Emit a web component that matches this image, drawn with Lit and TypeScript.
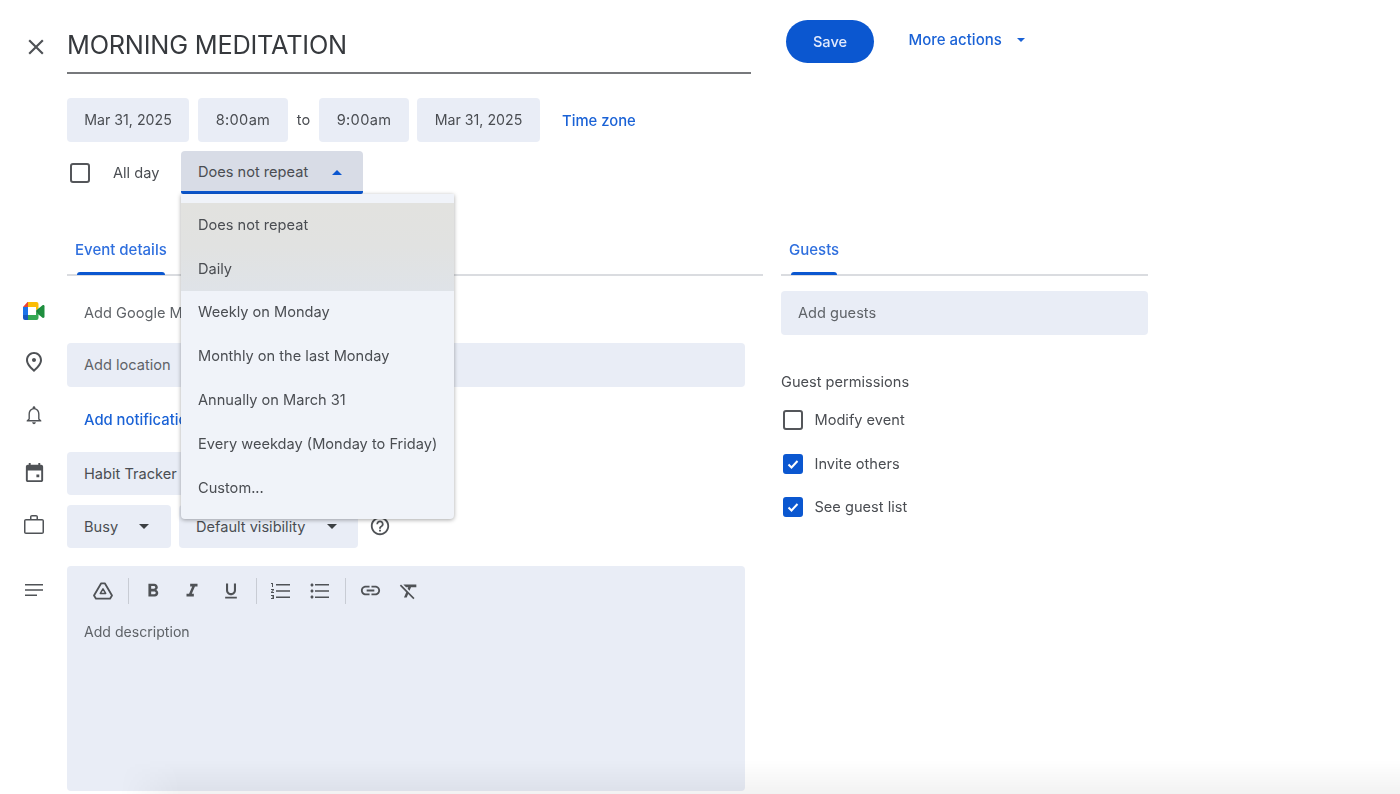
import { LitElement, css, html, svg } from "lit";
import { customElement } from "lit/decorators.js";

const ICONS: Record<string, string> = {
  close: "M19 6.41L17.59 5 12 10.59 6.41 5 5 6.41 10.59 12 5 17.59 6.41 19 12 13.41 17.59 19 19 17.59 13.41 12z",
  place: "M12 12c-1.1 0-2-.9-2-2s.9-2 2-2 2 .9 2 2-.9 2-2 2zm6-1.8C18 6.57 15.35 4 12 4s-6 2.57-6 6.2c0 2.34 1.95 5.44 6 9.14 4.05-3.7 6-6.8 6-9.14zM12 2c4.2 0 8 3.22 8 8.2 0 3.32-2.67 7.25-8 11.8-5.33-4.55-8-8.48-8-11.8C4 5.22 7.8 2 12 2z",
  bell: "M12 22c1.1 0 2-.9 2-2h-4c0 1.1.9 2 2 2zm6-6v-5c0-3.07-1.63-5.64-4.5-6.32V4c0-.83-.67-1.5-1.5-1.5s-1.500.67-1.500 1.500v.68C7.64 5.36 6 7.92 6 11v5l-2 2v1h16v-1l-2-2zm-.7 1.5H6.700l.8-.9V11c0-2.800 1.700-5.200 4.500-5.200s4.500 2.400 4.500 5.200v5.600z",
  event: "M19 4h-1V2h-2v2H8V2H6v2H5c-1.1 0-2 .9-2 2v14c0 1.1.9 2 2 2h14c1.1 0 2-.9 2-2V6c0-1.1-.9-2-2-2zm0 16H5V10h14v10zM14 14h3v3h-3z",
  work: "M20 6h-4V4c0-1.11-.89-2-2-2h-4c-1.11 0-2 .89-2 2v2H4c-1.11 0-1.99.89-1.99 2L2 19c0 1.11.89 2 2 2h16c1.11 0 2-.89 2-2V8c0-1.11-.89-2-2-2zm-5.500 0h-5V3.500h5V6zm6 13.500h-17V7.500h17v12z",
  notes: "M3 18h12v-1.600H3V18zM3 6v1.600h18V6H3zm0 6.800h18v-1.600H3v1.600z",
  help: "M11 18h2v-2h-2v2zm1-16C6.48 2 2 6.48 2 12s4.48 10 10 10 10-4.48 10-10S17.52 2 12 2zm0 18c-4.41 0-8-3.59-8-8s3.59-8 8-8 8 3.59 8 8-3.59 8-8 8zm0-14c-2.21 0-4 1.79-4 4h2c0-1.1.9-2 2-2s2 .9 2 2c0 2-3 1.75-3 5h2c0-2.25 3-2.5 3-5 0-2.21-1.79-4-4-4z",
  bold: "M15.6 10.79c.97-.67 1.65-1.77 1.65-2.79 0-2.26-1.75-4-4-4H7v14h7.04c2.09 0 3.71-1.7 3.71-3.79 0-1.52-.86-2.82-2.15-3.42zM10 6.5h3c.83 0 1.5.67 1.5 1.5s-.67 1.5-1.5 1.5h-3v-3zm3.5 9H10v-3h3.5c.83 0 1.5.67 1.5 1.5s-.67 1.5-1.5 1.5z",
  italic: "M10 4v3h2.21l-3.42 8H6v3h8v-3h-2.21l3.42-8H18V4z",
  underline: "M12 17c3.31 0 6-2.69 6-6V3h-2.5v8c0 1.93-1.57 3.5-3.5 3.5S8.5 12.93 8.5 11V3H6v8c0 3.31 2.69 6 6 6zm-7 2v2h14v-2H5z",
  numbered: "M2 17h2v.5H3v1h1v.5H2v1h3v-4H2v1zm1-9h1V4H2v1h1v3zm-1 3h1.8L2 13.1v.9h3v-1H3.2L5 10.9V10H2v1zm5-6v1.600h14V5H7zm0 14h14v-1.600H7V19zm0-6.200h14v-1.600H7v1.600z",
  bulleted: "M4 10.5c-.83 0-1.5.67-1.5 1.5s.67 1.5 1.5 1.5 1.5-.67 1.5-1.5-.67-1.5-1.5-1.500zm0-6c-.83 0-1.5.67-1.5 1.5S3.17 7.5 4 7.5 5.5 6.83 5.5 6 4.83 4.500 4 4.500zm0 12c-.83 0-1.5.68-1.5 1.5s.68 1.5 1.500 1.500 1.500-.68 1.500-1.500-.67-1.500-1.500-1.500zM7 19h14v-1.600H7V19zm0-6.200h14v-1.600H7v1.600zM7 5v1.600h14V5H7z",
  link: "M3.9 12c0-1.71 1.39-3.1 3.1-3.1h4V7H7c-2.76 0-5 2.24-5 5s2.24 5 5 5h4v-1.9H7c-1.71 0-3.1-1.39-3.1-3.1zM8 13h8v-2H8v2zm9-6h-4v1.9h4c1.71 0 3.1 1.39 3.1 3.1s-1.39 3.1-3.1 3.1h-4V17h4c2.76 0 5-2.24 5-5s-2.24-5-5-5z",
  clear: "M3.27 5L2 6.27l6.97 6.97L6.5 19h3l1.57-3.66L16.73 21 18 19.73 3.55 5.27 3.27 5zM6 5v.18L8.82 8h2.4l-.72 1.68 2.1 2.1L14.21 8H20V5H6z",
};

const icon = (name: string, size = 24) => html`<svg
  width=${size}
  height=${size}
  viewBox="0 0 24 24"
  fill="currentColor"
>
  ${svg`<path d=${ICONS[name]} />`}
</svg>`;

const meetLogo = html`<svg width="22" height="18" viewBox="0 0 22 18">
  <path d="M4.500 0H13v5H5L0 5z" fill="#ea4335" />
  <path d="M5 0h8.500A2 2 0 0 1 15.500 2v4.500L13 8.500V5H5z" fill="#fbbc04" />
  <path d="M0 5h5v8H0z" fill="#1a73e8" />
  <path d="M0 13h5v5H2a2 2 0 0 1-2-2z" fill="#1558c0" />
  <path d="M5 13h8v-3.500l2.500 2V16a2 2 0 0 1-2 2H5z" fill="#34a853" />
  <path d="M13 9l2.500-2.500 4-3.200c.8-.6 2-.1 2 .9v10.600c0 1-1.200 1.500-2 .9l-4-3.200z" fill="#1e8e3e" />
  <path d="M13 9l2.500-2.500v5z" fill="#188038" />
</svg>`;

const driveIcon = html`<svg width="24" height="24" viewBox="0 0 24 24" fill="none" stroke="currentColor">
  <path
    stroke-width="1.800"
    stroke-linejoin="round"
    d="M10.200 4.300h3.600l7.200 12.200-2 3.200H5l-2-3.200z"
  />
  <path stroke-width="1.500" stroke-linejoin="round" d="M12 9.800l2.700 4.600H9.300z" />
</svg>`;

const repeatOptions = [
  "Does not repeat",
  "Daily",
  "Weekly on Monday",
  "Monthly on the last Monday",
  "Annually on March 31",
  "Every weekday (Monday to Friday)",
  "Custom...",
];

const check = html`<svg width="14" height="14" viewBox="0 0 14 14" fill="none">
  <path d="M2.500 7.500l3 3 6-6.500" stroke="#fff" stroke-width="2" />
</svg>`;

@customElement("app-root")
export class AppRoot extends LitElement {
  static styles = css`
    :host {
      display: block;
      position: relative;
      width: 1400px;
      height: 794px;
      overflow: hidden;
      background: #fff;
      font-family: Inter, "Liberation Sans", sans-serif;
      font-size: 14.600px;
      color: #4a4d52;
    }

    svg {
      flex: none;
    }

    .page {
      display: grid;
      grid-template-columns: 763px 367px;
      column-gap: 18px;
      filter: blur(0.45px);
    }

    .left,
    .right {
      display: flex;
      flex-direction: column;
    }

    .row {
      display: grid;
      grid-template-columns: 67px 1fr;
      align-items: center;
    }

    .gutter {
      display: flex;
      justify-content: center;
      margin-left: 1px;
      color: #4f5256;
    }

    .title-row {
      height: 74px;
      align-items: end;
    }

    .title-row .gutter {
      align-self: start;
      padding: 34px 0 0 3px;
    }

    .title {
      width: 684px;
      box-sizing: border-box;
      height: 48px;
      padding-top: 1px;
      border-bottom: 2px solid #77797c;
      font-size: 25.300px;
      line-height: 36px;
      color: #36393d;
      letter-spacing: -0.2px;
    }

    .chip {
      display: flex;
      align-items: center;
      height: 43.500px;
      box-sizing: border-box;
      padding: 0 17px;
      background: #e9edf6;
      border-radius: 4px;
      white-space: nowrap;
    }

    .dates {
      display: flex;
      align-items: center;
      margin-top: 24px;
    }

    .date {
      width: 122px;
      justify-content: center;
      padding: 0;
      font-size: 14.200px;
    }

    .time {
      width: 90px;
      justify-content: center;
      padding: 0;
      letter-spacing: 0.3px;
    }

    .to {
      width: 31px;
      text-align: center;
    }

    .dates .date + .time {
      margin-left: 9px;
    }

    .dates .time + .date {
      margin-left: 8px;
      width: 123px;
    }

    .blue {
      color: #1a62d6;
      font-weight: 500;
      font-size: 14.800px;
    }

    .timezone {
      margin: 2px 0 0 22px;
    }

    .allday {
      display: flex;
      align-items: center;
      margin-top: 9.500px;
    }

    .box {
      width: 20px;
      height: 20px;
      box-sizing: border-box;
      border: 2px solid #54565a;
      border-radius: 3px;
      flex: none;
    }

    .box.on {
      display: flex;
      align-items: center;
      justify-content: center;
      background: #0b57d0;
      border-color: #0b57d0;
    }

    .allday .box {
      margin-left: 3px;
    }

    .allday-label {
      margin-left: 23px;
      width: 68px;
    }

    .select {
      position: relative;
      display: flex;
      align-items: center;
      width: 182px;
      height: 43px;
      box-sizing: border-box;
      padding: 2px 0 0 17px;
      background: #d8dce6;
      border-bottom: 3px solid #0b57d0;
      border-radius: 4px 4px 2px 2px;
    }

    .caret {
      width: 0;
      height: 0;
      border-left: 5.500px solid transparent;
      border-right: 5.500px solid transparent;
      border-top: 5.500px solid #3c4043;
    }

    .caret.up {
      border-top: 0;
      border-bottom: 5.500px solid #0b57d0;
      margin-left: 23.500px;
    }

    .caret.small {
      border-left-width: 4.500px;
      border-right-width: 4.500px;
      border-top: 4.500px solid #1a62d6;
      margin-left: 15px;
    }

    .menu {
      position: absolute;
      left: 0;
      top: 43px;
      z-index: 2;
      width: 273px;
      box-sizing: border-box;
      padding: 9px 0;
      background: #f0f3f9;
      border-radius: 0 0 4px 4px;
      box-shadow: 0 1px 4px rgba(0, 0, 0, 0.35);
    }

    .option {
      display: flex;
      align-items: center;
      height: 43.800px;
      padding-left: 17px;
      white-space: nowrap;
    }

    .option.first {
      background: linear-gradient(#e2e2df, #e1e2e1);
    }

    .option.second {
      background: linear-gradient(#e1e2e1, #dfe3e8);
    }

    .tabs {
      margin: 34px 0 0 67px;
      height: 48px;
      box-sizing: border-box;
      border-bottom: 2px solid #dadce0;
    }

    .right .tabs {
      margin-left: 0;
      margin-top: 165px;
    }

    .tab {
      display: inline-flex;
      flex-direction: column;
      align-items: center;
      height: 47px;
      margin-left: 8px;
      padding-top: 12px;
      box-sizing: border-box;
      color: #2f6fde;
      font-weight: 500;
      font-size: 15px;
    }

    .tab::after {
      content: "";
      display: block;
      width: calc(100% - 4px);
      height: 3px;
      margin-top: auto;
      background: #0b57d0;
      border-radius: 3px 3px 0 0;
    }

    .tab-row {
      margin-top: 15px;
    }

    .tab-row .gutter {
      padding-bottom: 4px;
    }

    .plain {
      display: flex;
      align-items: center;
      height: 43.500px;
      padding-left: 17px;
      color: #5f6368;
      white-space: nowrap;
    }

    .plain.blue {
      color: #1a62d6;
      padding-top: 1px;
      box-sizing: border-box;
    }

    .field {
      width: 678px;
      color: #5f6368;
    }

    .location {
      margin-top: 8.500px;
    }

    .location .gutter {
      padding-bottom: 6px;
    }

    .location .chip {
      height: 44px;
    }

    .notification {
      margin-top: 11px;
    }

    .notification .gutter {
      padding-bottom: 10px;
    }

    .calendar {
      margin-top: 10px;
    }

    .calendar .gutter {
      padding-bottom: 2px;
    }

    .calendar .chip {
      width: 380px;
      padding-top: 2px;
    }

    .visibility {
      margin-top: 9.500px;
    }

    .visibility .gutter {
      padding-bottom: 3px;
    }

    .visibility-inner {
      display: flex;
      align-items: center;
    }

    .visibility-inner .chip {
      padding-top: 1px;
    }

    .busy {
      width: 104px;
    }

    .busy .caret {
      margin-left: 21px;
    }

    .default {
      width: 179px;
      margin-left: 8px;
    }

    .default .caret {
      margin-left: 21.500px;
    }

    .help {
      display: flex;
      margin-left: 11px;
      color: #4f5256;
    }

    .desc-row {
      margin-top: 17.500px;
      align-items: start;
    }

    .desc-row .gutter {
      padding-top: 12px;
    }

    .desc {
      width: 678px;
      height: 225px;
      box-sizing: border-box;
      padding: 13px 17px;
      background: #e9edf6;
      border-radius: 4px;
      color: #5f6368;
    }

    .toolbar {
      display: flex;
      align-items: center;
      height: 24px;
      color: #4f5256;
      margin-left: 9px;
    }

    .tool {
      display: flex;
      width: 20px;
      justify-content: center;
      margin-right: 19px;
    }

    .sep {
      width: 1px;
      height: 26px;
      background: #c8ccd4;
      margin: 0 14px 0 -4px;
    }

    .desc-text {
      margin-top: 20px;
      font-size: 14.100px;
    }

    .actions {
      display: flex;
      align-items: center;
      height: 63px;
      padding: 20px 0 0 5px;
      box-sizing: border-box;
    }

    .save {
      display: flex;
      align-items: center;
      justify-content: center;
      width: 88px;
      height: 43px;
      background: #0b57d0;
      color: #e3eafc;
      border-radius: 22px;
      font-weight: 500;
    }

    .more {
      display: flex;
      align-items: center;
      margin: -4px 0 0 34.500px;
      font-size: 15px;
    }

    .guests {
      margin-top: 15px;
      width: 367px;
    }

    .guests-text {
      color: #5f6368;
    }

    .perm-title {
      margin-top: 38px;
      line-height: 18px;
    }

    .perm {
      display: flex;
      align-items: center;
      height: 43.700px;
      padding-left: 2px;
      gap: 11.500px;
    }

    .perm-list {
      margin-top: 7.500px;
    }

    .shade {
      position: absolute;
      left: 120px;
      right: 0;
      bottom: 0;
      height: 34px;
      z-index: 3;
      background: linear-gradient(rgba(0, 0, 0, 0), rgba(0, 0, 0, 0.05));
      -webkit-mask-image: linear-gradient(90deg, transparent, #000 60px);
      mask-image: linear-gradient(90deg, transparent, #000 60px);
      pointer-events: none;
    }
  `;

  render() {
    return html`
      <div class="page">
        <div class="left">
          <div class="row title-row">
            <div class="gutter">${icon("close", 26)}</div>
            <div class="title">MORNING MEDITATION</div>
          </div>

          <div class="row">
            <div></div>
            <div class="dates">
              <div class="chip date">Mar 31, 2025</div>
              <div class="chip time">8:00am</div>
              <div class="to">to</div>
              <div class="chip time">9:00am</div>
              <div class="chip date">Mar 31, 2025</div>
              <div class="blue timezone">Time zone</div>
            </div>
          </div>

          <div class="row">
            <div></div>
            <div class="allday">
              <div class="box"></div>
              <div class="allday-label">All day</div>
              <div class="select">
                Does not repeat
                <span class="caret up"></span>
                <div class="menu">
                  ${repeatOptions.map(
                    (opt, i) => html`<div
                      class="option ${i === 0 ? "first" : i === 1 ? "second" : ""}"
                    >
                      ${opt}
                    </div>`
                  )}
                </div>
              </div>
            </div>
          </div>

          <div class="tabs"><div class="tab">Event details</div></div>

          <div class="row tab-row">
            <div class="gutter">${meetLogo}</div>
            <div class="plain">Add Google Meet video conferencing</div>
          </div>
          <div class="row location">
            <div class="gutter">${icon("place")}</div>
            <div class="chip field">Add location</div>
          </div>
          <div class="row notification">
            <div class="gutter">${icon("bell", 22)}</div>
            <div class="plain blue">Add notification</div>
          </div>
          <div class="row calendar">
            <div class="gutter">${icon("event", 23)}</div>
            <div class="chip">Habit Tracker</div>
          </div>
          <div class="row visibility">
            <div class="gutter">${icon("work")}</div>
            <div class="visibility-inner">
              <div class="chip busy">Busy<span class="caret"></span></div>
              <div class="chip default">
                Default visibility<span class="caret"></span>
              </div>
              <div class="help">${icon("help", 22)}</div>
            </div>
          </div>
          <div class="row desc-row">
            <div class="gutter">${icon("notes")}</div>
            <div class="desc">
              <div class="toolbar">
                <span class="tool">${driveIcon}</span>
                <span class="sep"></span>
                <span class="tool">${icon("bold", 22)}</span>
                <span class="tool">${icon("italic", 22)}</span>
                <span class="tool">${icon("underline", 20)}</span>
                <span class="sep"></span>
                <span class="tool">${icon("numbered", 24)}</span>
                <span class="tool">${icon("bulleted", 24)}</span>
                <span class="sep"></span>
                <span class="tool">${icon("link", 23)}</span>
                <span class="tool">${icon("clear", 22)}</span>
              </div>
              <div class="desc-text">Add description</div>
            </div>
          </div>
        </div>

        <div class="right">
          <div class="actions">
            <div class="save">Save</div>
            <div class="more blue">
              More actions<span class="caret small"></span>
            </div>
          </div>
          <div class="tabs"><div class="tab">Guests</div></div>
          <div class="chip guests">
            <span class="guests-text">Add guests</span>
          </div>
          <div class="perm-title">Guest permissions</div>
          <div class="perm-list">
            <div class="perm"><span class="box"></span>Modify event</div>
            <div class="perm"><span class="box on">${check}</span>Invite others</div>
            <div class="perm"><span class="box on">${check}</span>See guest list</div>
          </div>
        </div>
      </div>
      <div class="shade"></div>
    `;
  }
}
